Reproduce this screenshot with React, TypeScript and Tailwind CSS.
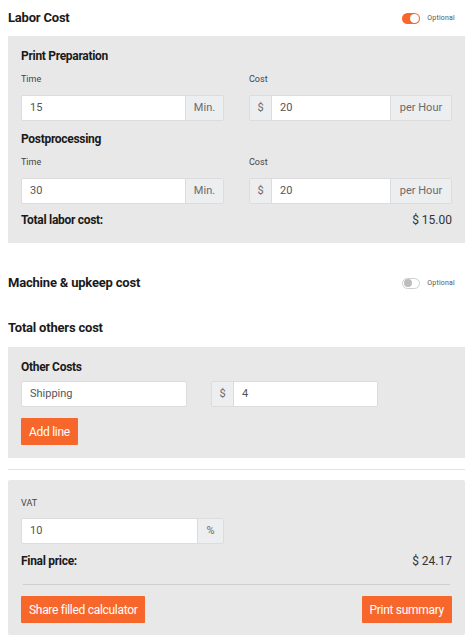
import React from "react";

const ORANGE = "bg-[#f7672c]";

function Toggle({ on }: { on: boolean }) {
  return (
    <div className="flex items-center gap-[7px]">
      {on ? (
        <div className={`w-[18px] h-[11px] rounded-full ${ORANGE} flex items-center justify-end pr-[1px]`}>
          <div className="w-[9px] h-[9px] rounded-full bg-white" />
        </div>
      ) : (
        <div className="w-[18px] h-[11px] rounded-full bg-white border border-[#cfcfcf] flex items-center pl-[1px]">
          <div className="w-[8px] h-[8px] rounded-full bg-[#bdbdbd]" />
        </div>
      )}
      <span className="text-[7px] text-[#555] tracking-[0.2px]">Optional</span>
    </div>
  );
}

function Addon({ children, w }: { children: React.ReactNode; w: string }) {
  return (
    <div
      className={`${w} shrink-0 h-full flex items-center justify-center bg-[#eceeef] text-[11px] text-[#6b6b6b]`}
    >
      {children}
    </div>
  );
}

function Field({
  value,
  before,
  after,
  afterW = "w-[38px]",
  w = "w-[203px]",
}: {
  value: string;
  before?: string;
  after?: string;
  afterW?: string;
  w?: string;
}) {
  return (
    <div className={`${w} h-[26px] flex border border-[#dcdcdc] rounded-[2px] overflow-hidden bg-white`}>
      {before && <Addon w="w-[22px] border-r border-[#dcdcdc]">{before}</Addon>}
      <div className="flex-1 flex items-center px-[8px] text-[11px] text-[#555]">{value}</div>
      {after && <Addon w={`${afterW} border-l border-[#dcdcdc]`}>{after}</Addon>}
    </div>
  );
}

function Label({ children }: { children: React.ReactNode }) {
  return <div className="text-[9px] leading-[12px] text-[#444]">{children}</div>;
}

function SubHead({ children }: { children: React.ReactNode }) {
  return <div className="text-[12px] leading-[16px] font-bold text-[#1a1a1a] tracking-[-0.3px]">{children}</div>;
}

function Button({ children }: { children: React.ReactNode }) {
  return (
    <button className={`h-[27px] px-[8px] ${ORANGE} text-white text-[12px] rounded-[1px] tracking-[-0.3px]`}>
      {children}
    </button>
  );
}

function Heading({ children }: { children: React.ReactNode }) {
  return <h2 className="text-[13px] font-bold text-[#1a1a1a] tracking-[-0.2px]">{children}</h2>;
}

export default function App() {
  const labor = [
    { title: "Print Preparation", time: "15", cost: "20" },
    { title: "Postprocessing", time: "30", cost: "20" },
  ];

  return (
    <main
      className="w-[473px] min-h-[642px] bg-white pl-[8px] pr-[8px]"
      style={{ fontFamily: "Roboto, 'Liberation Sans', Arial, sans-serif" }}
    >
      {/* Labor cost */}
      <div className="h-[36px] flex items-center justify-between">
        <Heading>Labor Cost</Heading>
        <div className="mr-[10px]">
          <Toggle on />
        </div>
      </div>
      <section className="bg-[#e8e8e8] px-[13px] pt-[12px] pb-[15px]">
        {labor.map((row, i) => (
          <div key={row.title} className={i > 0 ? "mt-[10px]" : ""}>
            <SubHead>{row.title}</SubHead>
            <div className="flex gap-[25px] mt-[9px]">
              <div>
                <Label>Time</Label>
                <div className="mt-[10px]">
                  <Field value={row.time} after="Min." />
                </div>
              </div>
              <div>
                <Label>Cost</Label>
                <div className="mt-[10px]">
                  <Field value={row.cost} before="$" after="per Hour" afterW="w-[61px]" />
                </div>
              </div>
            </div>
          </div>
        ))}
        <div className="flex justify-between mt-[8px] text-[12px] leading-[16px]">
          <span className="font-bold text-[#1a1a1a] tracking-[-0.3px]">Total labor cost:</span>
          <span className="text-[#333]">$ 15.00</span>
        </div>
      </section>

      {/* Machine */}
      <div className="h-[36px] mt-[22px] flex items-center justify-between">
        <Heading>Machine &amp; upkeep cost</Heading>
        <div className="mr-[10px]">
          <Toggle on={false} />
        </div>
      </div>

      {/* Others */}
      <div className="h-[36px] mt-[9px] flex items-center">
        <Heading>Total others cost</Heading>
      </div>
      <section className="mt-[1px] bg-[#e8e8e8] px-[13px] pt-[12px] pb-[13px]">
        <SubHead>Other Costs</SubHead>
        <div className="flex gap-[24px] mt-[6px]">
          <Field value="Shipping" w="w-[166px]" />
          <Field value="4" before="$" w="w-[167px]" />
        </div>
        <div className="mt-[11px]">
          <Button>Add line</Button>
        </div>
      </section>

      <div className="mt-[11px] h-px bg-[#e2e2e2]" />

      {/* Final */}
      <section className="mt-[10px] bg-[#e8e8e8] px-[13px] pt-[17px] pb-[12px] rounded-[2px]">
        <Label>VAT</Label>
        <div className="mt-[9px]">
          <Field value="10" after="%" afterW="w-[26px]" />
        </div>
        <div className="flex justify-between mt-[9px] text-[12px] leading-[16px]">
          <span className="font-bold text-[#1a1a1a] tracking-[-0.3px]">Final price:</span>
          <span className="text-[#333]">$ 24.17</span>
        </div>
        <div className="mt-[15px] mx-[2px] h-px bg-[#cfcfcf]" />
        <div className="flex justify-between mt-[11px]">
          <Button>Share filled calculator</Button>
          <Button>Print summary</Button>
        </div>
      </section>
    </main>
  );
}
